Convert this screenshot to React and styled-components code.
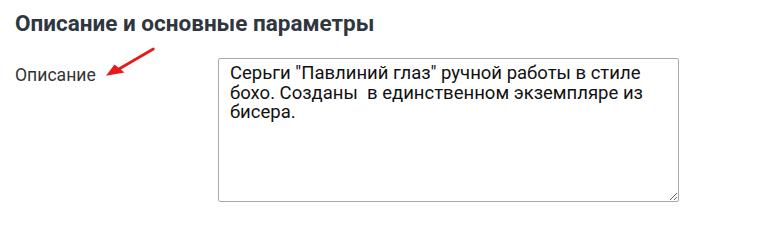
import styled, { createGlobalStyle } from "styled-components";

const GlobalStyle = createGlobalStyle`
  body {
    margin: 0;
    background: #ffffff;
    font-family: Roboto, "Liberation Sans", sans-serif;
  }
`;

const description =
  'Серьги "Павлиний глаз" ручной работы в стиле бохо. Созданы  в единственном экземпляре из бисера.';

export default function App() {
  return (
    <>
      <GlobalStyle />
      <Section>
        <Title>Описание и основные параметры</Title>
        <FieldRow>
          <LabelCell>
            <Label htmlFor="descr">Описание</Label>
            <Arrow width="60" height="36" viewBox="0 0 60 36">
              <line x1="53.3" y1="5" x2="19" y2="25" stroke="#e8191a" strokeWidth="2.8" strokeLinecap="round" />
              <polygon points="6,31.7 14.5,20.5 24.5,28.5" fill="#e8191a" />
            </Arrow>
          </LabelCell>
          <TextArea id="descr" defaultValue={description} />
        </FieldRow>
      </Section>
    </>
  );
}

const Section = styled.div`
  padding: 9px 15px;
`;

const Title = styled.h2`
  margin: 0 0 21px;
  font-size: 22.5px;
  font-weight: 700;
  line-height: 28px;
  color: #2f3640;
`;

const FieldRow = styled.div`
  display: grid;
  grid-template-columns: 203px 461px;
  align-items: start;
`;

const LabelCell = styled.div`
  position: relative;
  padding-top: 6px;
`;

const Label = styled.label`
  font-size: 17.6px;
  line-height: 22px;
  color: #333333;
`;

const Arrow = styled.svg`
  position: absolute;
  left: 85px;
  top: -14px;
`;

const TextArea = styled.textarea`
  box-sizing: border-box;
  width: 461px;
  height: 144px;
  padding: 5px 11px;
  border: 1px solid #a9a9a9;
  border-radius: 2px;
  font-family: Roboto, "Liberation Sans", sans-serif;
  font-size: 18.5px;
  line-height: 19.5px;
  color: #111111;
  resize: both;
  outline: none;
`;
